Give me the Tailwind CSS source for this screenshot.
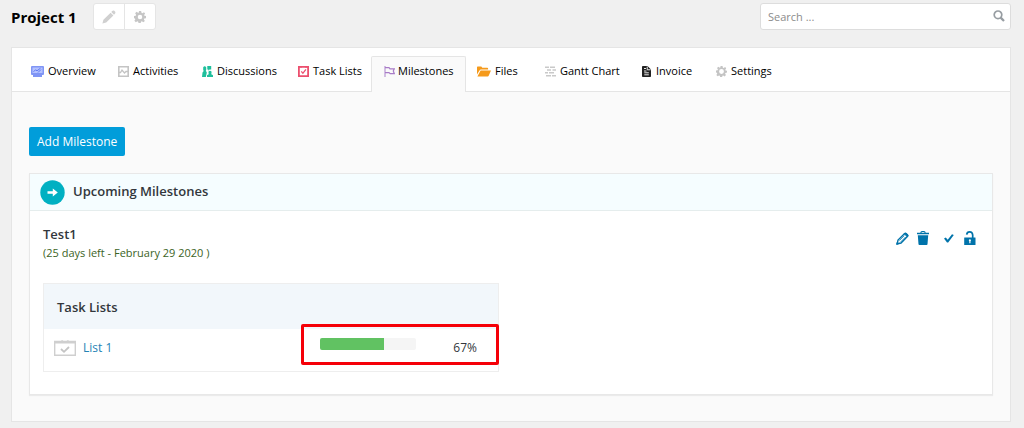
<!DOCTYPE html>
<html lang="en">
<head>
<meta charset="utf-8">
<meta name="viewport" content="width=device-width, initial-scale=1">
<title>Project 1 – Milestones</title>
<script src="https://cdn.jsdelivr.net/npm/@tailwindcss/browser@4"></script>
</head>
<body class="min-h-screen bg-[#f0f0f0] font-['Open_Sans','Noto_Sans',sans-serif] text-[11px] text-[#23282d]">
<div class="pl-[11px] pr-[13px] pt-[3px] pb-[6px]">
  <header class="flex items-start">
    <h1 class="w-[82px] whitespace-nowrap text-[15px] leading-[28px] font-bold text-black">Project 1</h1>
    <div class="flex h-[27px] rounded-[3px] border border-[#e5e5e5] bg-white">
      <button type="button" aria-label="Edit project" class="flex w-[31px] items-center justify-center border-r border-[#e5e5e5] text-[#d0d0d0]">
        <svg class="size-[14px]" viewBox="0 0 14 14" fill="currentColor"><path d="M.4 13.500l1-3.800 7.200-7 2.800 2.800L4.200 12.600zM9.300 2l.9-.9c.8-.7 1.600-.7 2.300-.1l.5.5c.6.7.6 1.500-.1 2.300l-.9.9z"/></svg>
      </button>
      <button type="button" aria-label="Project settings" class="flex w-[30px] items-center justify-center text-[#c6c6c6]">
        <svg class="size-[12px]" viewBox="0 0 16 16" fill="currentColor" fill-rule="evenodd"><path d="M6.500 0h3l.5 2.400 1.200.5L13.300 1.500l1.500 1.900-1.300 1.900.4 1.100 2.100.4v2.700l-2.300.5-.5 1.200 1.300 2-2 1.900-2-1.400-1.200.5-.4 2.300h-2.800l-.5-2.300-1.200-.5-2 1.300-1.900-1.900 1.300-2-.5-1.200L0 9.500v-2.800l2.300-.5.5-1.200L1.500 3l1.900-1.900 2 1.300 1.200-.5zM8 5a3 3 0 100 6 3 3 0 000-6z"/></svg>
      </button>
    </div>
    <form class="relative ml-auto w-[251px]" role="search">
      <input type="search" aria-label="Search" placeholder="Search ..." class="block h-[27px] w-full rounded-[3px] border border-[#ddd] bg-white px-[7px] text-[11px] outline-none placeholder:text-[#8c8c8c]">
      <button type="button" aria-label="Run search" class="absolute right-[6px] top-[7px] text-[#979da2]">
        <svg class="block size-[12px]" viewBox="0 0 12 12" fill="none" stroke="currentColor"><circle cx="5" cy="4.800" r="3.800" stroke-width="1.700"/><path d="M7.700 7.600l3.300 3.400" stroke-width="2.300"/></svg>
      </button>
    </form>
  </header>

  <main class="mt-[16px] border border-[#e5e5e5] bg-[#fafafa]">
    <nav aria-label="Project sections" class="flex h-[44px] items-end border-b border-[#e5e5e5] bg-white pl-[7px] text-black">
      <a href="#" class="mb-[2px] flex h-[36px] w-[87px] items-center gap-[4px] pl-[12px] whitespace-nowrap">
        <svg class="h-[11px] w-[13px] shrink-0" viewBox="0 0 13 11"><path d="M1 0h11q1 0 1 1v7q0 1-1 1h-1v2H2V9H1Q0 9 0 8V1q0-1 1-1z" fill="#8095f5"/><path d="M1.500 1.500h10v5.500h-10z" fill="#b4c2ff"/><path d="M2.500 5.800l2-2 1.500 1 3.500-2.600M7 6.500l3-3" stroke="#5f78f0" fill="none"/></svg>Overview</a>
      <a href="#" class="mb-[2px] flex h-[36px] w-[84px] items-center gap-[4px] pl-[12px] whitespace-nowrap">
        <svg class="size-[11px] shrink-0" viewBox="0 0 11 11" fill="none" stroke="#c4c4c4"><path d="M.8.8h9.400v9.400H.8z" stroke-width="1.600"/><path d="M1 6.500h1.500L4 4l2.500 3L8 5.500h2" stroke-width="1.300"/></svg>Activities</a>
      <a href="#" class="mb-[2px] flex h-[36px] w-[96px] items-center gap-[4px] pl-[12px] whitespace-nowrap">
        <svg class="size-[11px] shrink-0" viewBox="0 0 11 11" fill="#1fbf9c"><path d="M1.200 1.200Q2.700-.5 4.200 1.200V4L3.700 5l1 1v1.200L3.800 11H0l.5-4.500L1.700 5 1.200 4zM6.500 5.500Q8 4 9.500 5.500v2L9 8l2 1.300V11H5V9.300L7 8l-.5-.5zM5.300 0h3.900v3.500H7.500L6.300 4.700V3.500h-1z"/></svg>Discussions</a>
      <a href="#" class="mb-[2px] flex h-[36px] w-[85px] items-center gap-[4px] pl-[12px] whitespace-nowrap">
        <svg class="size-[11px] shrink-0" viewBox="0 0 11 11" fill="none" stroke="#ec4f6e"><path d="M.9.9h9.200v9.200H.9z" stroke-width="1.800"/><path d="M3.300 5.300l1.600 2 3-4" stroke-width="1.300"/><path d="M3 0v2M8 0v2"/></svg>Task Lists</a>
      <a href="#" aria-current="page" class="-mb-px flex h-[36px] w-[95px] items-center gap-[3px] rounded-t-[2px] border border-b-0 border-[#e5e5e5] bg-[#fafafa] pb-[7px] pl-[12px] whitespace-nowrap">
        <svg class="size-[11px] shrink-0" viewBox="0 0 11 11" fill="none" stroke="#a87bc7"><path d="M1 0v11" stroke="#b896d3" stroke-width="1.200"/><path d="M1 1.600h4l1 1.200h4.300L9.300 5l1 2.700H6.200L5 6.600H1" stroke-width="1.200"/></svg>Milestones</a>
      <a href="#" class="mb-[2px] flex h-[36px] w-[67px] items-center gap-[4px] pl-[11px] whitespace-nowrap">
        <svg class="h-[11px] w-[14px] shrink-0" viewBox="0 0 14 11" fill="#f59a1b"><path d="M0 8.500V1.200Q0 .5.700.5h3.600l1 1.300h5q.8 0 .8.800v1H4Q3 3.600 2.500 4.400zM3.600 4.500H14l-2.300 5.300q-.3.700-1 .7H.4z"/></svg>Files</a>
      <a href="#" class="mb-[2px] flex h-[36px] w-[97px] items-center gap-[4px] pl-[12px] whitespace-nowrap">
        <svg class="size-[11px] shrink-0" viewBox="0 0 11 11" fill="none" stroke="#c9c9c9" stroke-width="1.500"><path d="M0 1.200h4M5 1.200h5M2 4h4M7.500 4H11M0 6.800h3M4 6.800h5M1 9.700h5M7 9.700h4"/></svg>Gantt Chart</a>
      <a href="#" class="mb-[2px] flex h-[36px] w-[74px] items-center gap-[5px] pl-[12px] whitespace-nowrap">
        <svg class="h-[11px] w-[9px] shrink-0" viewBox="0 0 9 11"><path d="M0 .8Q0 0 .8 0H5.500L9 3.500v6.700q0 .8-.8.800H.8Q0 11 0 10.200z" fill="#222"/><path d="M5.200.5v3.300h3.300M2 2.500h2M2 5h2.500M2.300 6.800h4.500M2.300 8.800h4.500" stroke="#fff" stroke-width=".9" fill="none"/></svg>Invoice</a>
      <a href="#" class="mb-[2px] flex h-[36px] items-center gap-[4px] pl-[12px] whitespace-nowrap">
        <svg class="size-[11px] shrink-0 text-[#c4c4c4]" viewBox="0 0 16 16" fill="currentColor" fill-rule="evenodd"><path d="M6.500 0h3l.5 2.400 1.200.5L13.300 1.500l1.500 1.900-1.300 1.900.4 1.100 2.100.4v2.700l-2.300.5-.5 1.200 1.300 2-2 1.900-2-1.400-1.200.5-.4 2.300h-2.800l-.5-2.300-1.200-.5-2 1.300-1.900-1.900 1.300-2-.5-1.200L0 9.500v-2.800l2.300-.5.5-1.200L1.500 3l1.900-1.900 2 1.300 1.200-.5zM8 4.500a3.500 3.500 0 100 7 3.500 3.500 0 000-7z"/></svg>Settings</a>
    </nav>

    <div class="px-[17px] pt-[35px] pb-[26px]">
      <button type="button" class="block h-[29px] rounded-[2px] bg-[#019dda] px-[8px] text-[12px] whitespace-nowrap text-white">Add Milestone</button>

      <section class="mt-[17px] border border-[#e8e8e8] bg-white shadow-[0_1px_1px_rgba(0,0,0,0.06)]">
        <h2 class="flex h-[37px] items-center gap-[8px] border-b border-[#e5eded] bg-[#f5fdff] pl-[10px] text-[13px] font-semibold text-[#32373c]">
          <svg class="size-[25px]" viewBox="0 0 25 25"><circle cx="12.500" cy="12.500" r="12.200" fill="#00b0c2"/><path d="M7.500 11.300h5.300V8.600l5 3.900-5 3.900v-2.700H7.500z" fill="#fff"/></svg>
          Upcoming Milestones
        </h2>
        <div class="px-[13px] pt-[13px] pb-[22px]">
          <div class="flex items-start justify-between">
            <div>
              <h3 class="text-[13px] leading-[20px] font-semibold text-[#32373c]">Test1</h3>
              <p class="text-[11px] leading-[18px] text-[#3c6325]">(25 days left - February 29 2020 )</p>
            </div>
            <div class="mt-[7px] mr-[3px] flex items-center text-[#0073aa]">
              <button type="button" aria-label="Edit milestone"><svg class="size-[13px]" viewBox="0 0 13 13" fill="none" stroke="currentColor"><path d="M1.200 11.800l.8-3.800L8.400 1.700q1-.9 1.900 0l1.100 1.100q.8.900 0 1.800L5 11z" stroke-width="1.400"/><path d="M3.300 8.600l5-5M4.700 9.900l5-5" stroke-width=".8"/><path d="M8.300 1.800l3 3 .6-1.500-2-2z" fill="currentColor"/><path d="M.7 12.300l.5-2 1.500 1.500z" fill="currentColor"/></svg></button>
              <button type="button" aria-label="Delete milestone" class="ml-[8px]"><svg class="h-[14px] w-[12px]" viewBox="0 0 12 14" fill="currentColor"><path d="M3.300 1.700Q3.500 0 5 0h2q1.500 0 1.700 1.700H12v1.600H0V1.700zm1.100 0h3.200Q7.500 1 7 1H5q-.5 0-.6.700zM.8 4.200h10.400l-.7 9q-.1.800-.9.800H2.400q-.8 0-.9-.8z"/></svg></button>
              <button type="button" aria-label="Mark complete" class="ml-[15px]"><svg class="h-[9px] w-[10px]" viewBox="0 0 10 9" fill="currentColor"><path d="M0 4.600L1.800 3.400l1.900 2.400L8 .2l1.800.9L4.200 8.500H3z"/></svg></button>
              <button type="button" aria-label="Toggle privacy" class="ml-[10px]"><svg class="h-[14px] w-[12px]" viewBox="0 0 12 14" fill="none"><path d="M2.700 3.600Q3 .9 5.700.9T8.700 4v3" stroke="currentColor" stroke-width="1.700"/><path d="M.5 6.500h10.700q.3 0 .3.300V13.700q0 .3-.3.300H.5q-.3 0-.3-.3V6.800q0-.3.300-.3z" fill="currentColor"/><path d="M5.900 8.300a1.100 1.100 0 01.6 2v2H5.300v-2a1.100 1.100 0 01.6-2z" fill="#fff"/></svg></button>
            </div>
          </div>

          <div class="relative mt-[21px] w-[456px]">
            <table class="w-full table-fixed border-collapse border border-[#eeeeee]">
              <colgroup><col class="w-[276px]"><col class="w-[96px]"><col></colgroup>
              <thead>
                <tr class="h-[45px] bg-[#f2f7fb]"><th scope="col" colspan="3" class="p-0 pt-[3px] pl-[13px] text-left text-[13px] font-semibold text-[#32373c]">Task Lists</th></tr>
              </thead>
              <tbody>
                <tr class="h-[43px]">
                  <td class="p-0 pb-[4px] pl-[10px]">
                    <a href="#" class="flex items-center gap-[7px] text-[12px] text-[#2583b5]">
                      <svg class="h-[16px] w-[22px]" viewBox="0 0 22 16" fill="none"><path d="M.7 1.500h20.600v13.800H.7z" stroke="#cfcfcf" stroke-width="1.400"/><path d="M0 1h7l1-1 1.500 1h3L14 0l1 1h7v2.600H0z" fill="#cfcfcf"/><path d="M7 9l3 2.800L15 7" stroke="#c4c4c4" stroke-width="1.800"/></svg>
                      List 1</a>
                  </td>
                  <td class="p-0 pb-[12px]">
                    <div role="progressbar" aria-label="List 1 progress" aria-valuenow="67" aria-valuemin="0" aria-valuemax="100" class="h-[12px] overflow-hidden rounded-[2px] bg-[#f5f5f5]"><div class="h-full bg-[#61c262]" style="width:67%"></div></div>
                  </td>
                  <td class="p-0 pr-[21px] pb-[4px] text-right text-[12px] text-[#32373c]">67%</td>
                </tr>
              </tbody>
            </table>
            <div class="pointer-events-none absolute right-0 bottom-[7px] h-[41px] w-[198px] rounded-[2px] border-[3px] border-[#f50008]" aria-hidden="true"></div>
          </div>
        </div>
      </section>
    </div>
  </main>
</div>
</body>
</html>
